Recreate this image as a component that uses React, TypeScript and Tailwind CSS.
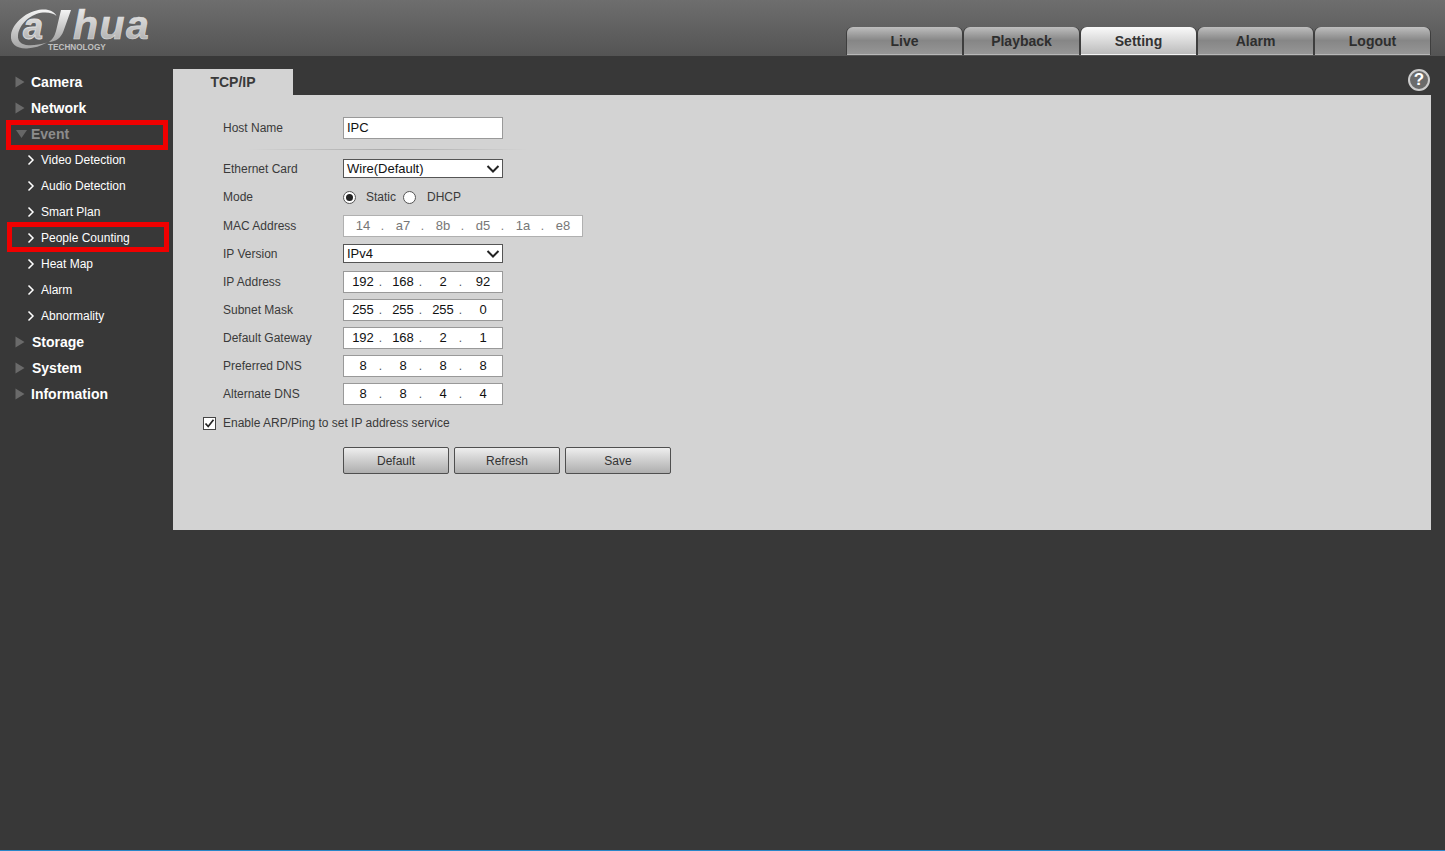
import React from "react";

const tabs = ["Live", "Playback", "Setting", "Alarm", "Logout"];

function Logo() {
  return (
    <svg width="150" height="56" viewBox="0 0 150 56" className="ml-[10px]">
      <defs>
        <linearGradient id="lg" x1="0" y1="0" x2="0" y2="1">
          <stop offset="0" stopColor="#f4f4f4" />
          <stop offset="1" stopColor="#a4a4a4" />
        </linearGradient>
      </defs>
      <g transform="translate(0 4)">
        <path d="M32 5.5C17 6.5 2.5 19 1 31C0 40 7 45 17 44.5C24 44 31 42 37 38.5C30 40.5 24 41.5 18.5 41.2C11 41 7.5 37 8 31.5C9 20 21 9.5 33 8.5C39 8 44 9.5 46.5 12C44.5 7.5 39 5 32 5.5Z" fill="url(#lg)" />
        <text x="13" y="35" fontFamily="Liberation Sans, sans-serif" fontWeight="700" fontStyle="italic" fontSize="36" stroke="#e0e0e0" strokeWidth="0.8" fill="url(#lg)">a</text>
        <path d="M51 6H61L53.5 27C51 34 46 37.5 39 38C43 35 44.5 32 46 27Z" fill="url(#lg)" />
        <text x="63" y="35" fontFamily="Liberation Sans, sans-serif" fontWeight="700" fontStyle="italic" fontSize="41" letterSpacing="1.5" stroke="#dddddd" strokeWidth="0.6" fill="url(#lg)">hua</text>
        <text x="38" y="45.5" fontFamily="Liberation Sans, sans-serif" fontWeight="700" fontSize="8.2" fill="#c0c0c0">TECHNOLOGY</text>
      </g>
    </svg>
  );
}

function Triangle({ down }: { down?: boolean }) {
  return (
    <svg width="14" height="14" viewBox="0 0 14 14" className="shrink-0">
      {down ? (
        <path d="M1 3H12L6.5 11Z" fill="#666666" />
      ) : (
        <path d="M0.5 1.5L9.5 7L0.5 12.5Z" fill="#6a6a6a" />
      )}
    </svg>
  );
}

function Chevron() {
  return (
    <svg width="8" height="12" viewBox="0 0 8 12" className="shrink-0">
      <path d="M1.5 1.5L6 6L1.5 10.5" fill="none" stroke="#ffffff" strokeWidth="1.5" />
    </svg>
  );
}

function Top({ label, down, left }: { label: string; down?: boolean; left?: boolean }) {
  return (
    <div className="h-[26px] flex items-center pl-[15px]">
      <Triangle down={down} />
      <span className={`${left ? "ml-[3px]" : "ml-[2px]"} text-[14px] font-bold ${down ? "text-[#8c8c8c]" : "text-white"}`}>{label}</span>
    </div>
  );
}

function Sub({ label }: { label: string }) {
  return (
    <div className="h-[26px] flex items-center pl-[27px] text-[12px] text-white">
      <Chevron />
      <span className="ml-[6px]">{label}</span>
    </div>
  );
}

function Row({ label, className, children }: { label: string; className: string; children: React.ReactNode }) {
  return (
    <div className={`flex items-center text-[12px] ${className}`}>
      <span className="w-[120px] shrink-0 text-[#3a3a3a]">{label}</span>
      {children}
    </div>
  );
}

function Segs({ values, mac }: { values: string[]; mac?: boolean }) {
  return (
    <div className={`h-[22px] flex bg-white border ${mac ? "w-[240px] border-[#b0b0b0] text-[#777777]" : "w-[160px] border-[#999999] text-[#111111]"} text-[13px]`}>
      <div className="flex -ml-px">
        {values.map((v, i) => (
          <div key={i} className="relative w-10 shrink-0 flex items-center justify-center">
            {v}
            {i < values.length - 1 && (
              <span className={`absolute text-[12px] ${mac ? "-right-[1px] text-[#777777]" : "right-[1px] text-[#555555]"}`}>.</span>
            )}
          </div>
        ))}
      </div>
    </div>
  );
}

function Select({ value }: { value: string }) {
  return (
    <div className="w-[160px] h-[19px] bg-white border border-[#555555] flex items-center justify-between pl-[3px] pr-[2px] text-[13px] text-[#111111]">
      <span>{value}</span>
      <svg width="14" height="10" viewBox="0 0 14 10">
        <path d="M1.5 2L7 7.5L12.5 2" fill="none" stroke="#222222" strokeWidth="2" />
      </svg>
    </div>
  );
}

function Radio({ on }: { on?: boolean }) {
  return (
    <span className="w-[13px] h-[13px] rounded-full bg-white border border-[#555555] flex items-center justify-center shrink-0">
      {on && <span className="w-[7px] h-[7px] rounded-full bg-[#222222]" />}
    </span>
  );
}

function Btn({ label }: { label: string }) {
  return (
    <button className="w-[106px] h-[27px] rounded-[2px] border border-[#4f4f4f] bg-gradient-to-b from-[#eeeeee] to-[#aeaeae] text-[12px] text-[#333333]">
      {label}
    </button>
  );
}

export default function App() {
  return (
    <div
      className="h-[851px] flex flex-col bg-[#383838] overflow-hidden"
      style={{ fontFamily: '"Liberation Sans", Arial, sans-serif' }}
    >
      <header className="h-14 shrink-0 flex justify-between bg-gradient-to-b from-[#6e6e6e] to-[#545454] pr-[15px]">
        <Logo />
        <nav className="flex gap-[2px] items-end pb-px">
          {tabs.map((t) => (
            <div
              key={t}
              className={`w-[115px] h-[28px] pt-[2px] rounded-t-[6px] flex items-center justify-center text-[14px] font-bold border-b shadow-[1px_0_0_#3e3e3e,-1px_0_0_#3e3e3e] ${
                t === "Setting"
                  ? "bg-gradient-to-b from-[#fafafa] to-[#bcbcbc] text-[#333333] border-[#f4f4f4]"
                  : "bg-gradient-to-b from-[#bebebe] via-[#868686] to-[#969696] text-[#2e2e2e] border-[#b8b8b8]"
              }`}
            >
              {t}
            </div>
          ))}
        </nav>
      </header>

      <main className="flex-1 flex min-h-0">
        <aside className="w-[173px] shrink-0 pt-[13px]">
          <Top label="Camera" />
          <Top label="Network" />
          <div className="relative">
            <Top label="Event" down />
            <div className="absolute left-[6px] top-[-1px] w-[162px] h-[30px] border-[5px] border-[#f00000]" />
          </div>
          <Sub label="Video Detection" />
          <Sub label="Audio Detection" />
          <Sub label="Smart Plan" />
          <div className="relative">
            <Sub label="People Counting" />
            <div className="absolute left-[7px] top-[-3px] w-[162px] h-[30px] border-[5px] border-[#f00000]" />
          </div>
          <Sub label="Heat Map" />
          <Sub label="Alarm" />
          <Sub label="Abnormality" />
          <Top label="Storage" left />
          <Top label="System" left />
          <Top label="Information" />
        </aside>

        <section className="flex-1 pt-[13px] pr-[14px]">
          <div className="flex justify-between h-[26px]">
            <div className="w-[120px] bg-[#d3d3d3] flex items-center justify-center text-[14px] font-bold text-[#3a3a3a]">
              TCP/IP
            </div>
            <div className="w-[22px] h-[22px] mr-px rounded-full border-2 border-[#cccccc] bg-[#6a6a6a] flex items-center justify-center text-[17px] font-bold text-white">
              ?
            </div>
          </div>
          <div className="h-[435px] bg-[#d3d3d3] pl-[50px] pt-[22px]">
            <Row label="Host Name" className="">
              <div className="w-[160px] h-[22px] bg-white border border-[#999999] flex items-center pl-[3px] text-[13px] text-[#111111]">IPC</div>
            </Row>
            <div className="ml-[25px] mt-[10px] w-[280px] h-px bg-gradient-to-r from-transparent via-[#aaaaaa] to-transparent" />
            <Row label="Ethernet Card" className="mt-[9px]">
              <Select value="Wire(Default)" />
            </Row>
            <Row label="Mode" className="mt-[9px] h-[20px]">
              <Radio on />
              <span className="ml-[10px] text-[#3a3a3a]">Static</span>
              <span className="ml-[7px]"><Radio /></span>
              <span className="ml-[11px] text-[#3a3a3a]">DHCP</span>
            </Row>
            <Row label="MAC Address" className="mt-[8px]">
              <Segs mac values={["14", "a7", "8b", "d5", "1a", "e8"]} />
            </Row>
            <Row label="IP Version" className="mt-[7px]">
              <Select value="IPv4" />
            </Row>
            <Row label="IP Address" className="mt-[8px]">
              <Segs values={["192", "168", "2", "92"]} />
            </Row>
            <Row label="Subnet Mask" className="mt-[6px]">
              <Segs values={["255", "255", "255", "0"]} />
            </Row>
            <Row label="Default Gateway" className="mt-[6px]">
              <Segs values={["192", "168", "2", "1"]} />
            </Row>
            <Row label="Preferred DNS" className="mt-[6px]">
              <Segs values={["8", "8", "8", "8"]} />
            </Row>
            <Row label="Alternate DNS" className="mt-[6px]">
              <Segs values={["8", "8", "4", "4"]} />
            </Row>
            <div className="flex items-center mt-[9px] -ml-5 text-[12px] text-[#3a3a3a]">
              <span className="w-[13px] h-[13px] bg-white border border-[#444444] flex items-center justify-center">
                <svg width="11" height="11" viewBox="0 0 11 11">
                  <path d="M1.5 5.5L4.2 8.5L9.5 1.8" fill="none" stroke="#222222" strokeWidth="1.7" />
                </svg>
              </span>
              <span className="ml-[7px]">Enable ARP/Ping to set IP address service</span>
            </div>
            <div className="flex gap-[5px] ml-[120px] mt-[15px]">
              <Btn label="Default" />
              <Btn label="Refresh" />
              <Btn label="Save" />
            </div>
          </div>
        </section>
      </main>
      <div className="h-px shrink-0 bg-[#2a86c8]" />
    </div>
  );
}
